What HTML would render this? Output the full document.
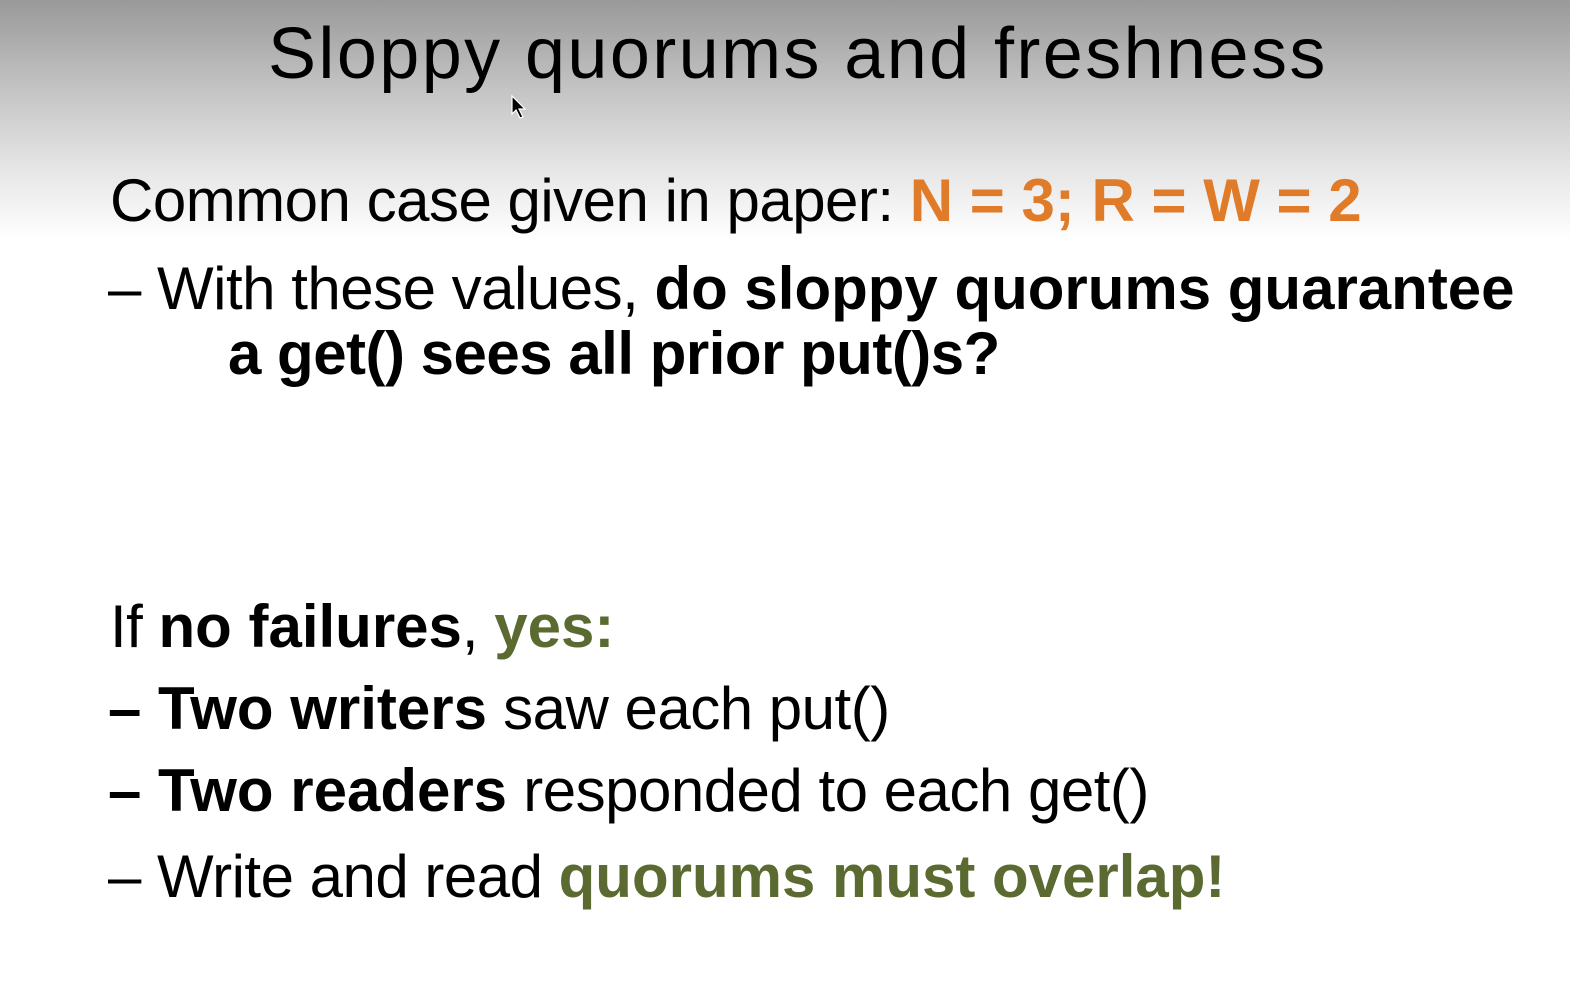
<!DOCTYPE html>
<html><head><meta charset="utf-8"><style>
html,body{margin:0;padding:0}
body{width:1570px;height:982px;overflow:hidden;position:relative;font-family:"Liberation Sans",Arial,sans-serif;color:#000;
background:linear-gradient(to bottom,#999 0px,#c4c4c4 90px,#e6e6e6 170px,#fff 240px,#fff 982px);}
.t{position:absolute;white-space:nowrap;line-height:1;}
.b{font-weight:bold;letter-spacing:0px}
.o{color:#e07b2a;font-weight:bold;letter-spacing:0px}
.g{color:#5a6a30;font-weight:bold;letter-spacing:0px}
.body{font-size:60px;letter-spacing:-0.5px}
</style></head><body>
<div class="t" style="left:268px;top:18px;font-size:72px;letter-spacing:2.4px;">Sloppy quorums and freshness</div>
<svg style="position:absolute;left:510px;top:94px" width="20" height="28" viewBox="0 0 20 28"><path d="M2 2 L2 20 L6 16 L10 24 L13 23 L9 15 L15 15 Z" fill="#000" stroke="#fff" stroke-width="1.2"/></svg>
<div class="t body" style="left:110px;top:171px;">Common case given in paper: <span class="o">N = 3; R = W = 2</span></div>
<div class="t body" style="left:108px;top:259px;">– With these values, <span class="b">do sloppy quorums guarantee</span></div>
<div class="t body b" style="left:228px;top:324px;">a get() sees all prior put()s?</div>
<div class="t body" style="left:110px;top:597px;">If <span class="b">no failures</span>, <span class="g">yes:</span></div>
<div class="t body" style="left:108px;top:679px;"><span class="b">– Two writers</span> saw each put()</div>
<div class="t body" style="left:108px;top:761px;"><span class="b">– Two readers</span> responded to each get()</div>
<div class="t body" style="left:108px;top:847px;">– Write and read <span class="g">quorums must overlap!</span></div>
</body></html>
